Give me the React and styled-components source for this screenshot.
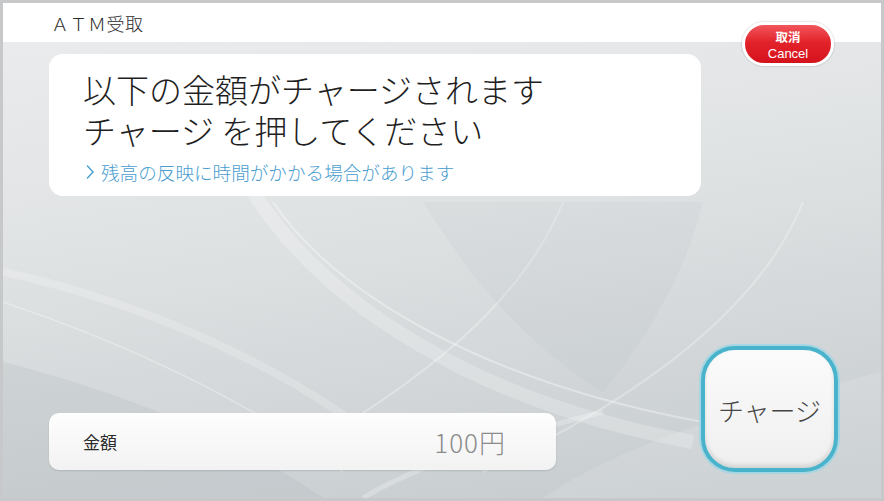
import React from "react";
import styled, { createGlobalStyle } from "styled-components";

const Global = createGlobalStyle`
  html, body { margin: 0; padding: 0; background: #ffffff; }
  * { box-sizing: border-box; }
`;

const JP = `"Noto Sans CJK JP", "Noto Sans", sans-serif`;

const Frame = styled.div`
  position: relative;
  width: 884px;
  height: 501px;
  border: 3px solid #c7c8c9;
  display: flex;
  flex-direction: column;
  font-family: ${JP};
  overflow: hidden;
`;

const Header = styled.header`
  height: 39px;
  flex: none;
  background: #ffffff;
  display: flex;
  align-items: center;
  padding-left: 48px;
  padding-top: 1px;
  font-size: 18px;
  font-weight: 300;
  color: #2b2b2b;
  letter-spacing: 0.5px;
`;

const Main = styled.main`
  position: relative;
  flex: 1;
  display: flex;
  flex-direction: column;
  justify-content: space-between;
  padding: 12px 43px 26px 46px;
  background: linear-gradient(172deg, #eaebec 0%, #dfe2e3 40%, #d2d6d8 70%, #c5cbce 100%);
`;

const Decor = styled.svg`
  position: absolute;
  inset: 0;
  width: 100%;
  height: 100%;
  z-index: 0;
  pointer-events: none;
`;

const Card = styled.section`
  position: relative;
  z-index: 1;
  width: 652px;
  height: 142px;
  background: #ffffff;
  border-radius: 14px;
  padding: 15px 20px 0 34px;
`;

const Headline = styled.h1`
  margin: 0;
  font-size: 33px;
  font-weight: 300;
  color: #1f1f1f;
`;

const HeadLine = styled.span`
  display: block;
  height: 41px;
  line-height: 41px;
`;

const Note = styled.p`
  margin: 9px 0 0 2px;
  font-size: 18.6px;
  font-weight: 300;
  line-height: 24px;
  color: #4a9dcf;
  display: flex;
  align-items: center;
  gap: 6px;
`;

const Chevron = styled.svg`
  width: 10px;
  height: 16px;
  flex: none;
`;

const BottomRow = styled.div`
  position: relative;
  z-index: 1;
  display: flex;
  align-items: flex-end;
  justify-content: space-between;
`;

const AmountBox = styled.div`
  width: 507px;
  height: 57px;
  margin-bottom: 2px;
  border-radius: 10px;
  background: linear-gradient(#fefefe, #f2f2f2);
  box-shadow: 0 1px 2px rgba(0, 0, 0, 0.12);
  display: flex;
  align-items: center;
  justify-content: space-between;
  padding: 0 50px 0 34px;
`;

const AmountLabel = styled.span`
  font-size: 17px;
  color: #2a2a2a;
`;

const AmountValue = styled.span`
  font-size: 26px;
  color: #8c8c8c;
  font-weight: 300;
  letter-spacing: 1px;
`;

const ChargeButton = styled.button`
  width: 137px;
  height: 126px;
  border-radius: 34px;
  border: 4px solid #48b3cb;
  box-shadow: 0 0 0 2px rgba(150, 215, 232, 0.75), inset 0 -3px 4px rgba(0, 0, 0, 0.12);
  background: linear-gradient(#fbfbfb, #efefef);
  font-family: ${JP};
  font-size: 26px;
  font-weight: 300;
  color: #454545;
  padding: 0;
  cursor: pointer;
`;

const CancelButton = styled.button`
  position: absolute;
  top: 19px;
  left: 739px;
  width: 92px;
  height: 44px;
  border-radius: 22px;
  border: 3px solid #ffffff;
  box-shadow: 0 0 2px rgba(0, 0, 0, 0.3);
  background: linear-gradient(#f0565b 0%, #e3232b 45%, #d4121b 100%);
  color: #ffffff;
  display: flex;
  flex-direction: column;
  align-items: center;
  justify-content: center;
  padding: 0;
  cursor: pointer;
  z-index: 2;
`;

const CancelJa = styled.span`
  font-family: ${JP};
  font-weight: 700;
  font-size: 12.5px;
  line-height: normal;
  margin-top: -1px;
`;

const CancelEn = styled.span`
  font-family: "Liberation Sans", Arial, sans-serif;
  font-size: 13px;
  line-height: normal;
`;

export default function App() {
  return (
    <>
      <Global />
      <Frame>
        <Header>ＡＴＭ受取</Header>
        <Main>
          <Decor viewBox="0 0 878 456" preserveAspectRatio="none">
            <path d="M0 456 L0 320 C120 350 240 400 320 456 Z" fill="rgba(175,183,187,0.25)" />
            <path d="M250 150 C320 260 470 360 690 400" stroke="rgba(255,255,255,0.22)" strokeWidth="14" fill="none" />
            <path d="M270 160 C330 250 480 340 700 380" stroke="rgba(255,255,255,0.35)" strokeWidth="2" fill="none" />
            <path d="M560 160 C520 260 420 340 280 420" stroke="rgba(255,255,255,0.3)" strokeWidth="2" fill="none" />
            <path d="M800 160 C760 260 650 350 480 430" stroke="rgba(255,255,255,0.28)" strokeWidth="2" fill="none" />
            <path d="M0 260 C120 300 250 360 340 430" stroke="rgba(255,255,255,0.3)" strokeWidth="1.5" fill="none" />
            <path d="M0 230 C140 260 300 330 400 420" stroke="rgba(255,255,255,0.2)" strokeWidth="8" fill="none" />
            <path d="M540 456 C620 400 760 360 878 330 L878 456 Z" fill="rgba(255,255,255,0.12)" />
            <path d="M360 456 C420 420 520 390 600 370" stroke="rgba(255,255,255,0.25)" strokeWidth="5" fill="none" />
            <path d="M420 160 C470 240 520 300 600 350 C640 300 680 240 700 160 Z" fill="rgba(170,178,182,0.1)" />
          </Decor>
          <Card>
            <Headline>
              <HeadLine>以下の金額がチャージされます</HeadLine>
              <HeadLine>チャージ を押してください</HeadLine>
            </Headline>
            <Note>
              <Chevron viewBox="0 0 10 16">
                <path d="M2 1.5 L8 8 L2 14.5" stroke="#4a9dcf" strokeWidth="1.4" fill="none" />
              </Chevron>
              残高の反映に時間がかかる場合があります
            </Note>
          </Card>
          <BottomRow>
            <AmountBox>
              <AmountLabel>金額</AmountLabel>
              <AmountValue>100円</AmountValue>
            </AmountBox>
            <ChargeButton>チャージ</ChargeButton>
          </BottomRow>
        </Main>
        <CancelButton>
          <CancelJa>取消</CancelJa>
          <CancelEn>Cancel</CancelEn>
        </CancelButton>
      </Frame>
    </>
  );
}
